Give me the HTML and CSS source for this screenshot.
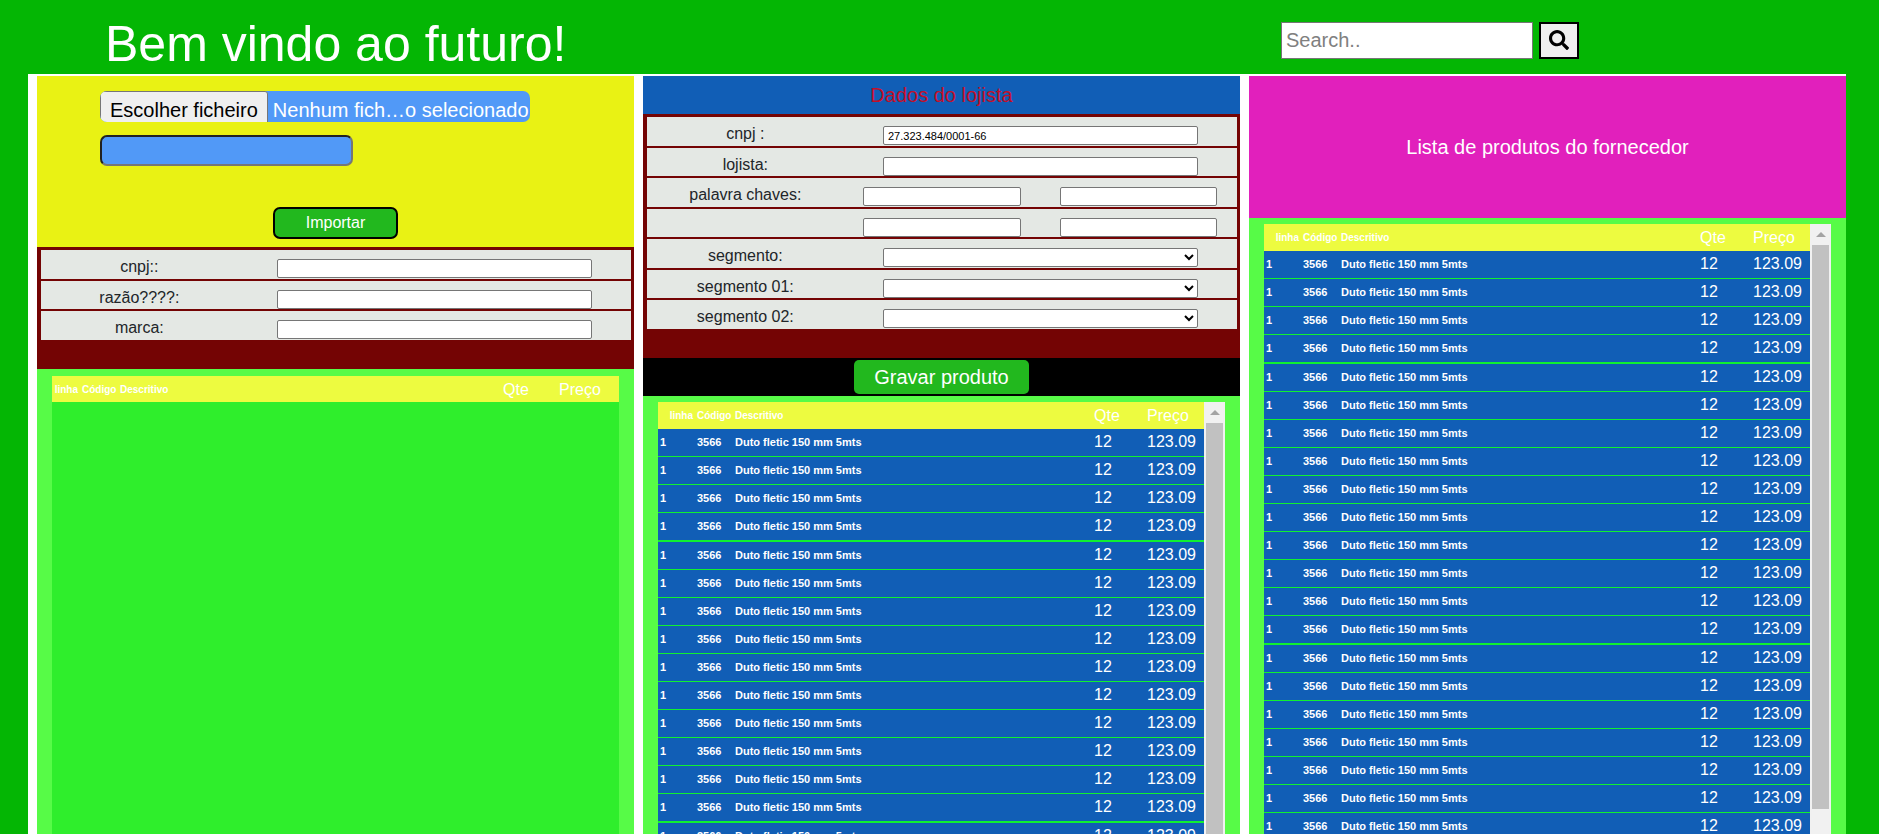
FILE: index.html
```html
<!DOCTYPE html>
<html lang="pt">
<head>
<meta charset="utf-8">
<title>Bem vindo ao futuro!</title>
<link rel="stylesheet" href="styles.css">
</head>
<body>
<header class="topbar">
  <h1 class="title">Bem vindo ao futuro!</h1>
  <form class="search">
    <input class="search-input" type="text" placeholder="Search.." aria-label="Search">
    <button class="search-button" type="button" aria-label="Search">
      <svg class="search-icon" viewBox="0 0 512 512" aria-hidden="true"><path d="M505 442.700L405.300 343c-4.500-4.500-10.600-7-17-7H372c27.600-35.300 44-79.700 44-128C416 93.100 322.900 0 208 0S0 93.100 0 208s93.100 208 208 208c48.300 0 92.700-16.400 128-44v16.300c0 6.400 2.500 12.500 7 17l99.700 99.700c9.400 9.400 24.600 9.400 33.900 0l28.300-28.300c9.400-9.400 9.400-24.600.1-34zM208 336c-70.700 0-128-57.200-128-128 0-70.700 57.200-128 128-128 70.700 0 128 57.200 128 128 0 70.700-57.200 128-128 128z"/></svg>
    </button>
  </form>
</header>

<main class="board">
  <section class="column">
    <form class="import">
      <label class="file">
        <input class="file-input" type="file">
        <span class="file-button">Escolher ficheiro</span>
        <span class="file-name">Nenhum fich…o selecionado</span>
      </label>
      <input class="import-text" type="text" aria-label="Ficheiro">
      <button class="import-button" type="button">Importar</button>
    </form>
    <form class="fields">
      <div class="rows rows-short">
        <div class="row"><label class="label" for="f-cnpj">cnpj::</label><div class="cell"><input class="box" id="f-cnpj" type="text"></div></div>
        <div class="row"><label class="label" for="f-razao">razão????:</label><div class="cell"><input class="box" id="f-razao" type="text"></div></div>
        <div class="row"><label class="label" for="f-marca">marca:</label><div class="cell"><input class="box" id="f-marca" type="text"></div></div>
      </div>
    </form>
    <div class="list list-empty">
      <div class="list-view">
        <table class="products">
          <thead><tr><th class="c-line">linha</th><th class="c-code">Código</th><th>Descritivo</th><th class="c-qty">Qte</th><th class="c-price">Preço</th></tr></thead>
        </table>
      </div>
    </div>
  </section>

  <section class="column">
    <h2 class="store-title">Dados do lojista</h2>
    <form class="fields">
      <div class="rows rows-long">
        <div class="row"><label class="label" for="l-cnpj">cnpj :</label><div class="cell"><input class="box" id="l-cnpj" type="text" value="27.323.484/0001-66"></div></div>
        <div class="row"><label class="label" for="l-nome">lojista:</label><div class="cell"><input class="box" id="l-nome" type="text"></div></div>
        <div class="row row-pair"><label class="label" for="l-p1">palavra chaves:</label><div class="cell"><input class="box" id="l-p1" type="text"></div><div class="cell"><input class="box" type="text" aria-label="palavra chave 2"></div></div>
        <div class="row row-pair"><span class="label"></span><div class="cell"><input class="box" type="text" aria-label="palavra chave 3"></div><div class="cell"><input class="box" type="text" aria-label="palavra chave 4"></div></div>
        <div class="row"><label class="label" for="l-s0">segmento:</label><div class="cell"><select class="box select" id="l-s0"><option></option></select></div></div>
        <div class="row"><label class="label" for="l-s1">segmento 01:</label><div class="cell"><select class="box select" id="l-s1"><option></option></select></div></div>
        <div class="row"><label class="label" for="l-s2">segmento 02:</label><div class="cell"><select class="box select" id="l-s2"><option></option></select></div></div>
      </div>
    </form>
    <div class="actions"><button class="save-button" type="button">Gravar produto</button></div>
    <div class="list">
      <div class="list-view">
        <table class="products">
          <thead><tr><th class="c-line">linha</th><th class="c-code">Código</th><th>Descritivo</th><th class="c-qty">Qte</th><th class="c-price">Preço</th></tr></thead>
          <tbody data-rows="15"></tbody>
        </table>
      </div>
      <div class="scrollbar"><span class="arrow"></span><span class="thumb"></span></div>
    </div>
  </section>

  <section class="column">
    <h2 class="supplier-title">Lista de produtos do fornecedor</h2>
    <div class="list">
      <div class="list-view">
        <table class="products">
          <thead><tr><th class="c-line">linha</th><th class="c-code">Código</th><th>Descritivo</th><th class="c-qty">Qte</th><th class="c-price">Preço</th></tr></thead>
          <tbody data-rows="21"></tbody>
        </table>
      </div>
      <div class="scrollbar"><span class="arrow"></span><span class="thumb thumb-end"></span></div>
    </div>
  </section>
</main>
<script src="list.js"></script>
</body>
</html>
```
FILE: styles.css
```css
* {
  box-sizing: border-box;
}

body {
  margin: 0;
  height: 100vh;
  overflow: hidden;
  display: flex;
  flex-direction: column;
  background: #04b604;
  color: #212529;
  font: 16px/24px "Liberation Sans", Arial, sans-serif;
}

input,
button,
select {
  margin: 0;
  font-family: inherit;
}

.topbar {
  flex: none;
  height: 74px;
  display: flex;
  align-items: flex-start;
  justify-content: space-between;
  padding: 0 300px 0 105px;
}

.title {
  margin: 0;
  padding-top: 14px;
  color: #fff;
  font-size: 50px;
  font-weight: 400;
  line-height: 60px;
}

.search {
  display: flex;
  gap: 6px;
  padding-top: 22px;
}

.search-input {
  width: 252px;
  height: 37px;
  padding: 0 4px;
  border: 1px solid #767676;
  font-size: 20px;
}

.search-input::placeholder {
  color: #808080;
}

.search-button {
  width: 40px;
  height: 37px;
  padding: 0 0 2px;
  display: flex;
  align-items: center;
  justify-content: center;
  border: 2px solid #000;
  background: #efefef;
}

.search-icon {
  width: 20px;
  height: 20px;
}

.board {
  flex: 1;
  min-height: 0;
  display: grid;
  grid-template-columns: repeat(3, minmax(0, 1fr));
  gap: 9px;
  margin: 0 33px 0 28px;
  padding: 2px 0 0 9px;
  background: #fff;
}

.column {
  min-height: 0;
  display: flex;
  flex-direction: column;
}

/* Import panel */

.import {
  flex: none;
  height: 171px;
  display: flex;
  flex-direction: column;
  align-items: flex-start;
  padding: 15px 63px 8px;
  background: #e9f214;
}

.file {
  width: 430px;
  height: 31px;
  display: flex;
  overflow: hidden;
  border-radius: 7px;
  background: #5199f7;
  font-size: 20px;
  line-height: 36px;
  white-space: nowrap;
}

.file-input {
  position: absolute;
  opacity: 0;
  width: 1px;
  height: 1px;
}

.file-button {
  flex: none;
  height: 40px;
  padding: 0 9px;
  border: 1px solid #767676;
  border-radius: 3px;
  background: #efefef;
  color: #000;
}

.file-name {
  padding: 1px 0 0 5px;
  color: #fff;
}

.import-text {
  width: 253px;
  height: 31px;
  margin-top: 13px;
  border: 2px inset #767676;
  border-radius: 7px;
  background: #5199f7;
}

.import-button {
  width: 125px;
  height: 32px;
  margin-top: auto;
  align-self: center;
  border: 2px solid #000;
  border-radius: 7px;
  background: #22b81e;
  color: #fff;
  font-size: 16px;
}

/* Form rows */

.fields {
  flex: none;
  padding: 3px 3px 29px 4px;
  background: #740404;
}

.rows {
  display: grid;
  grid-auto-rows: 1fr;
  gap: 2px;
}

.rows-short {
  height: 90px;
}

.rows-long {
  height: 212px;
}

.row {
  display: grid;
  grid-template-columns: 1fr 2fr;
  min-height: 0;
  background: #e4e8e4;
}

.row-pair {
  grid-template-columns: 1fr 1fr 1fr;
}

.label {
  padding-top: 5px;
  line-height: 23px;
  text-align: center;
}

.cell {
  display: flex;
  justify-content: center;
  padding-top: 9px;
}

.box {
  width: 80%;
  height: 19px;
  padding: 0 4px;
  border: 1px solid #767676;
  border-radius: 2px;
  background: #fff;
  color: #000;
  font-size: 11px;
}

.select {
  padding: 0;
}

.store-title {
  flex: none;
  height: 38px;
  margin: 0;
  background: #115eb6;
  color: #c40f28;
  font-size: 20px;
  font-weight: 400;
  line-height: 38px;
  text-align: center;
}

.actions {
  flex: none;
  display: flex;
  justify-content: center;
  padding: 2px;
  background: #000;
}

.save-button {
  width: 175px;
  height: 34px;
  border: 0;
  border-radius: 5px;
  background: #22b81e;
  color: #fff;
  font-size: 20px;
}

.supplier-title {
  flex: none;
  height: 142px;
  margin: 0;
  display: flex;
  align-items: center;
  justify-content: center;
  background: #e120bc;
  color: #fff;
  font-size: 20px;
  font-weight: 400;
}

/* Product lists */

.list {
  flex: 1;
  min-height: 0;
  display: flex;
  padding: 6px 15px 0;
  background: #57fb47;
}

.list-view {
  flex: 1;
  min-width: 0;
  overflow: hidden;
  background: #2fee2c;
}

.list-empty {
  padding-top: 7px;
}

.products {
  width: 100%;
  table-layout: fixed;
  border-collapse: separate;
  border-spacing: 0;
  color: #fff;
}

.products th,
.products td {
  height: 28px;
  padding: 0 2px 1px;
  border-bottom: 1px solid #10f030;
  background: #115eb6;
  font-size: 11px;
  font-weight: 700;
  line-height: 20px;
  text-align: left;
  white-space: nowrap;
}

.products th {
  height: 27px;
  padding: 1px 2px 0;
  border: 0;
  background: #edfb40;
  font-size: 10px;
}

.list-empty .products th {
  height: 26px;
}

.products tr:nth-child(10n + 4) td {
  height: 29px;
  border-bottom-width: 2px;
}

.products .c-line {
  width: 37px;
}

.products th.c-line {
  text-align: right;
}

.products .c-code {
  width: 38px;
}

.products .c-qty,
.products .c-price {
  font-size: 16px;
  font-weight: 400;
}

.products .c-qty {
  width: 53px;
}

.products .c-price {
  width: 59px;
}

.list-empty .products .c-line {
  width: 28px;
}

.list-empty .products .c-qty {
  width: 56px;
}

.list-empty .products .c-price {
  width: 62px;
}

.scrollbar {
  flex: none;
  width: 21px;
  display: flex;
  flex-direction: column;
  align-items: center;
  background: #f1f1f1;
}

.arrow {
  flex: none;
  height: 21px;
  display: flex;
  align-items: center;
}

.arrow::before {
  content: "";
  border: 5px solid transparent;
  border-top-width: 0;
  border-bottom-color: #a3a3a3;
}

.thumb {
  flex: 1;
  width: 17px;
  background: #c1c1c1;
}

.thumb-end {
  margin-bottom: 25px;
}
```
FILE: list.js
```js
const product = { line: "1", code: "3566", name: "Duto fletic 150 mm 5mts", qty: "12", price: "123.09" };
const classes = { line: "c-line", code: "c-code", name: "", qty: "c-qty", price: "c-price" };

document.querySelectorAll("tbody[data-rows]").forEach((body) => {
  for (let i = 0; i < Number(body.dataset.rows); i++) {
    const row = body.insertRow();
    Object.keys(product).forEach((key) => {
      const cell = row.insertCell();
      cell.className = classes[key];
      cell.textContent = product[key];
    });
  }
});
```
